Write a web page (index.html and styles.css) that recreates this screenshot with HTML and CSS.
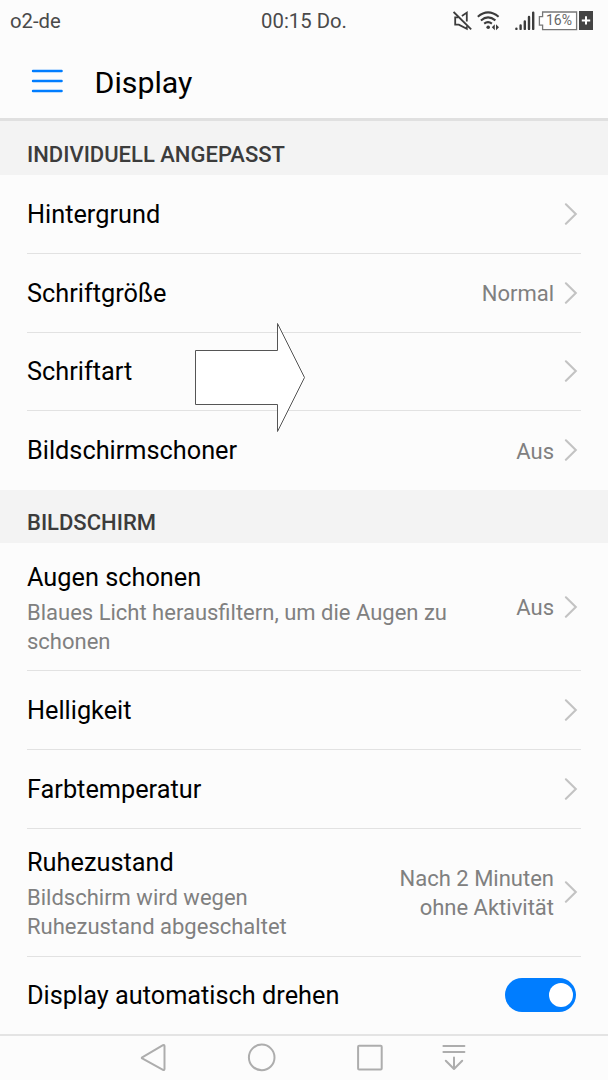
FILE: index.html
```html
<!DOCTYPE html>
<html lang="de">
  <head>
    <meta charset="UTF-8" />
    <meta name="viewport" content="width=device-width, initial-scale=1.0" />
    <title>Display</title>
    <link rel="stylesheet" href="styles.css">
  </head>
  <body>
    <svg class="sprite" width="0" height="0">
      <symbol id="chevron" viewBox="0 0 14 22">
        <path d="M1.9 1.3 L11.8 11 L1.9 20.7" fill="none" stroke="#c3c3c3" stroke-width="2.1" stroke-linecap="round" />
      </symbol>
    </svg>

    <div class="status-bar">
      <span class="carrier">o2-de</span>
      <span class="clock">00:15 Do.</span>
      <div class="status-icons">
        <svg class="icon-mute" width="20" height="22" viewBox="0 0 20 22" fill="none" stroke="#3c3c3c" stroke-width="1.8">
          <path d="M5.4 7.4 H2.2 V14.6 H5.8 L13.8 18.8 V16.2 M8.9 6 L13.8 2.6 V11.6" />
          <path d="M0.6 2 L18.2 19.3" />
        </svg>
        <svg class="icon-wifi" width="24" height="22" viewBox="0 0 24 22" fill="none" stroke="#3c3c3c" stroke-width="2">
          <path d="M0.8 6.7 Q11 -2 21.6 6.7" />
          <path d="M3.9 10.4 Q11 4.4 18.4 10.4" />
          <path d="M7.2 13.6 Q11 10.6 14.9 13.6" />
          <circle cx="11.2" cy="17.2" r="1.8" fill="#3c3c3c" stroke="none" />
          <path d="M17.8 14.2 V20.2 L14.8 17.2 Z M19 14.2 V20.2 L22 17.2 Z" fill="#3c3c3c" stroke="none" />
        </svg>
        <svg class="icon-signal" width="20" height="20" viewBox="0 0 20 20" stroke="#3c3c3c" stroke-width="2.4" stroke-linecap="round">
          <path d="M1.4 17.6 V17.9 M5.6 14.4 V17.9 M9.8 10.4 V17.9 M14 6 V17.9 M18.2 1.6 V17.9" />
        </svg>
        <div class="battery">
          <svg class="battery-outline" width="40" height="20" viewBox="0 0 40 20">
            <path d="M4.6 1 H38.6 V18.6 H4.6 V14.2 H1.4 V5.6 H4.6 Z" fill="#fff" stroke="#777" stroke-width="1.3" />
          </svg>
          <span class="battery-level">16%</span>
          <svg class="battery-plus" width="14" height="19" viewBox="0 0 14 19">
            <rect width="14" height="19" fill="#444" />
            <path d="M7 5.2 V13.6 M2.8 9.4 H11.2" stroke="#fff" stroke-width="2" />
          </svg>
        </div>
      </div>
    </div>

    <header class="app-bar">
      <svg class="menu" width="32" height="26" viewBox="0 0 32 26" stroke="#007dff" stroke-width="2.4" stroke-linecap="round">
        <path d="M2 3 H30.6 M2 13 H30.6 M2 23 H30.6" />
      </svg>
      <h1>Display</h1>
    </header>

    <main>
      <h2 class="section-title">INDIVIDUELL ANGEPASST</h2>
      <ul class="settings">
        <li class="row">
          <span class="label">Hintergrund</span>
          <svg class="chevron"><use href="#chevron" /></svg>
        </li>
        <li class="row">
          <span class="label">Schriftgröße</span>
          <span class="value">Normal</span>
          <svg class="chevron"><use href="#chevron" /></svg>
        </li>
        <li class="row">
          <span class="label">Schriftart</span>
          <svg class="chevron"><use href="#chevron" /></svg>
          <svg class="pointer" width="112" height="112" viewBox="0 0 112 112">
            <path d="M1.5 28.5 H83.5 V1.5 L110.5 55.5 L83.5 109.5 V82.5 H1.5 Z" fill="#fff" stroke="#555" stroke-width="1" />
          </svg>
        </li>
        <li class="row">
          <span class="label">Bildschirmschoner</span>
          <span class="value">Aus</span>
          <svg class="chevron"><use href="#chevron" /></svg>
        </li>
      </ul>

      <h2 class="section-title second">BILDSCHIRM</h2>
      <ul class="settings">
        <li class="row tall">
          <div class="text">
            <span class="label">Augen schonen</span>
            <p class="hint">Blaues Licht herausfiltern, um die Augen zu schonen</p>
          </div>
          <span class="value">Aus</span>
          <svg class="chevron"><use href="#chevron" /></svg>
        </li>
        <li class="row">
          <span class="label">Helligkeit</span>
          <svg class="chevron"><use href="#chevron" /></svg>
        </li>
        <li class="row">
          <span class="label">Farbtemperatur</span>
          <svg class="chevron"><use href="#chevron" /></svg>
        </li>
        <li class="row tall">
          <div class="text">
            <span class="label">Ruhezustand</span>
            <p class="hint">Bildschirm wird wegen<br>Ruhezustand abgeschaltet</p>
          </div>
          <span class="value">Nach 2 Minuten<br>ohne Aktivität</span>
          <svg class="chevron"><use href="#chevron" /></svg>
        </li>
        <li class="row">
          <span class="label">Display automatisch drehen</span>
          <span class="switch"><span class="knob"></span></span>
        </li>
      </ul>
    </main>

    <nav class="nav-bar">
      <svg class="nav-icon" width="30" height="30" viewBox="0 0 30 30">
        <path d="M3.2 14.4 L24 2.2 Q25.5 1.6 25.5 3.2 V25.8 Q25.5 27.6 24 26.8 L3.2 15.4 Q2.4 14.9 3.2 14.4 Z" />
      </svg>
      <svg class="nav-icon" width="30" height="30" viewBox="0 0 30 30">
        <circle cx="14.7" cy="14.4" r="12.8" />
      </svg>
      <svg class="nav-icon" width="30" height="30" viewBox="0 0 30 30">
        <rect x="3.1" y="2.8" width="23.6" height="23.6" rx="1" />
      </svg>
      <svg class="nav-icon" width="30" height="30" viewBox="0 0 30 30">
        <path d="M4.4 3 H25.4 M4.4 9 H25.4 M15 14.6 V25.8 M6.8 17.8 L15 26 L23.2 17.8" />
      </svg>
    </nav>
  </body>
</html>
```

FILE: styles.css
```css
* {
  box-sizing: border-box;
}

body {
  margin: 0;
  width: 608px;
  height: 1080px;
  overflow: hidden;
  display: flex;
  flex-direction: column;
  background: #fcfcfc;
  color: #000;
  font-family: Roboto, "Noto Sans", sans-serif;
}

.sprite {
  position: absolute;
}

/* Status bar */
.status-bar {
  display: grid;
  grid-template-columns: 1fr auto 1fr;
  align-items: center;
  flex-shrink: 0;
  height: 42px;
  padding: 0 15px 0 10px;
  font-size: 20.3px;
  color: #4a4a4a;
}

.clock {
  padding-left: 5px;
}

.status-icons {
  display: flex;
  align-items: center;
  justify-content: flex-end;
  margin-top: -1px;
}

.icon-wifi {
  margin-left: 4px;
}

.icon-signal {
  margin-left: 14px;
}

.battery {
  position: relative;
  display: flex;
  align-items: center;
  gap: 1px;
  margin-left: 3px;
}

.battery-level {
  position: absolute;
  left: 8px;
  font-size: 14px;
  line-height: 19px;
  color: #666;
}

/* App bar */
.app-bar {
  display: flex;
  align-items: center;
  flex-shrink: 0;
  height: 79px;
  padding: 2px 31px 0;
  border-bottom: 3px solid #e0e0e0;
}

.app-bar h1 {
  margin: 2px 0 0 31.5px;
  font-size: 30.3px;
  font-weight: 400;
}

main {
  flex: 1;
  min-height: 0;
  overflow: hidden;
}

/* Settings list */
.section-title {
  height: 54px;
  margin: 0;
  padding: 20px 27px 0;
  background: #f3f3f3;
  font-size: 22px;
  font-weight: 500;
  line-height: 28px;
  color: #3c3c3c;
}

.section-title.second {
  height: 53px;
  padding-top: 19px;
}

.settings {
  list-style: none;
  margin: 0;
  padding: 0 27px;
}

.row {
  position: relative;
  display: flex;
  align-items: center;
  height: 78.75px;
  border-bottom: 1px solid #e2e2e2;
}

.row.tall {
  height: 128px;
}

.row:last-child {
  border-bottom-color: transparent;
}

.label {
  flex: 1;
  padding-top: 2px;
  font-size: 25.3px;
  line-height: 30px;
}

.text {
  flex: 1;
  padding-top: 3px;
}

.text .label {
  display: block;
}

.hint {
  max-width: 430px;
  margin: 5px 0 0;
  font-size: 22px;
  line-height: 29px;
  color: #808080;
}

.value {
  padding-top: 2px;
  font-size: 22px;
  line-height: 29px;
  text-align: right;
  white-space: nowrap;
  color: #808080;
}

.chevron {
  flex-shrink: 0;
  width: 14px;
  height: 22px;
  margin: 0 3px 0 10px;
}

.pointer {
  position: absolute;
  left: 167px;
  top: -11px;
  z-index: 1;
}

.switch {
  display: flex;
  align-items: center;
  justify-content: flex-end;
  width: 71px;
  height: 34px;
  margin-right: 5px;
  padding: 0 3px;
  border-radius: 17px;
  background: #007dff;
}

.knob {
  width: 24px;
  height: 24px;
  border-radius: 50%;
  background: #fff;
}

/* Navigation bar */
.nav-bar {
  display: flex;
  align-items: flex-start;
  flex-shrink: 0;
  height: 46px;
  padding: 7px 0 0 139px;
  border-top: 2px solid #e4e4e4;
}

.nav-icon {
  margin-right: 78px;
  fill: none;
  stroke: #adadad;
  stroke-width: 2;
  stroke-linecap: round;
  stroke-linejoin: round;
}

.nav-icon:nth-child(3) {
  margin-right: 54px;
}
```
